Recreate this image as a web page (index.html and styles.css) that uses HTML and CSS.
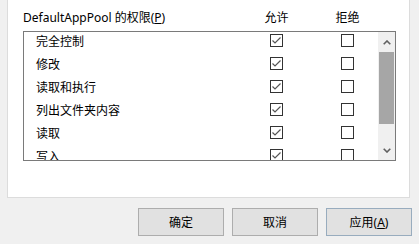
FILE: index.html
```html
<!DOCTYPE html>
<html lang="zh-CN">
<head>
<meta charset="utf-8">
<link rel="stylesheet" href="styles.css">
</head>
<body>
<div class="panel">
  <div class="head">
    <span class="title">DefaultAppPool 的权限(<u>P</u>)</span>
    <span class="col">允许</span>
    <span class="col col-deny">拒绝</span>
  </div>
  <div class="list">
    <div class="rows">
      <div class="row"><span class="name">完全控制</span><span class="cb"><svg viewBox="0 0 11 11" width="11" height="11"><polyline points="1.5,5.5 4,8 9.5,2.5"/></svg></span><span class="cb cb-deny"></span></div>
      <div class="row"><span class="name">修改</span><span class="cb"><svg viewBox="0 0 11 11" width="11" height="11"><polyline points="1.5,5.5 4,8 9.5,2.5"/></svg></span><span class="cb cb-deny"></span></div>
      <div class="row"><span class="name">读取和执行</span><span class="cb"><svg viewBox="0 0 11 11" width="11" height="11"><polyline points="1.5,5.5 4,8 9.5,2.5"/></svg></span><span class="cb cb-deny"></span></div>
      <div class="row"><span class="name">列出文件夹内容</span><span class="cb"><svg viewBox="0 0 11 11" width="11" height="11"><polyline points="1.5,5.5 4,8 9.5,2.5"/></svg></span><span class="cb cb-deny"></span></div>
      <div class="row"><span class="name">读取</span><span class="cb"><svg viewBox="0 0 11 11" width="11" height="11"><polyline points="1.5,5.5 4,8 9.5,2.5"/></svg></span><span class="cb cb-deny"></span></div>
      <div class="row"><span class="name">写入</span><span class="cb"><svg viewBox="0 0 11 11" width="11" height="11"><polyline points="1.5,5.5 4,8 9.5,2.5"/></svg></span><span class="cb cb-deny"></span></div>
    </div>
    <div class="sb">
      <div class="sb-btn"><svg viewBox="0 0 8 5" width="8" height="5"><polyline points="0.7,4.3 4,1 7.3,4.3"/></svg></div>
      <div class="sb-track"><div class="thumb"></div></div>
      <div class="sb-btn"><svg viewBox="0 0 8 5" width="8" height="5"><polyline points="0.7,0.7 4,4 7.3,0.7"/></svg></div>
    </div>
  </div>
</div>
<div class="buttons">
  <button class="btn">确定</button>
  <button class="btn">取消</button>
  <button class="btn btn-default">应用(<u>A</u>)</button>
</div>
</body>
</html>
```
FILE: styles.css
```css
html, body {
  margin: 0;
  padding: 0;
}
body {
  background: #f0f0f0;
  font-family: "Noto Sans", "Noto Sans CJK SC", sans-serif;
  font-size: 12px;
  color: #000;
  width: 419px;
  height: 244px;
  overflow: hidden;
}
.panel {
  box-sizing: border-box;
  margin-left: 7px;
  width: 403px;
  height: 198px;
  background: #fff;
  border: 1px solid #dcdcdc;
  border-top: none;
  padding: 10px 0 0 15px;
}
.head {
  display: flex;
  height: 16px;
  line-height: 16px;
  margin-bottom: 5px;
}
.title {
  width: 233px;
  white-space: nowrap;
}
.col {
  width: 41px;
  text-align: center;
}
.col-deny {
  margin-left: 30px;
}
.list {
  box-sizing: border-box;
  display: flex;
  width: 373px;
  height: 130px;
  border: 1px solid #7a7a7a;
  overflow: hidden;
}
.rows {
  flex: 1;
  padding-left: 12px;
  overflow: hidden;
}
.row {
  display: flex;
  align-items: flex-start;
  height: 23px;
}
.name {
  width: 234px;
  line-height: 20px;
  white-space: nowrap;
}
.cb {
  box-sizing: border-box;
  width: 13px;
  height: 13px;
  margin-top: 2px;
  border: 1px solid #333;
  background: #fff;
  display: flex;
}
.cb svg {
  display: block;
  fill: none;
  stroke: #555;
  stroke-width: 1.2;
}
.cb-deny {
  margin-left: 58px;
}
.sb {
  width: 17px;
  display: flex;
  flex-direction: column;
  background: #f0f0f0;
}
.sb-btn {
  height: 20px;
  display: flex;
  align-items: center;
  justify-content: center;
}
.sb-btn svg {
  display: block;
  fill: none;
  stroke: #606060;
  stroke-width: 1.6;
}
.sb-track {
  flex: 1;
  padding: 0 1px;
}
.thumb {
  height: 72px;
  background: #a6a6a6;
}
.buttons {
  display: flex;
  justify-content: flex-end;
  gap: 8px;
  padding-right: 7px;
  margin-top: 10px;
}
.btn {
  box-sizing: border-box;
  width: 86px;
  height: 28px;
  margin: 0;
  padding: 0;
  background: #e1e1e1;
  border: 1px solid #adadad;
  border-radius: 0;
  font-family: "Noto Sans", "Noto Sans CJK SC", sans-serif;
  font-size: 12px;
  color: #000;
}
.btn-default {
  border-color: #98acbe;
}
```
